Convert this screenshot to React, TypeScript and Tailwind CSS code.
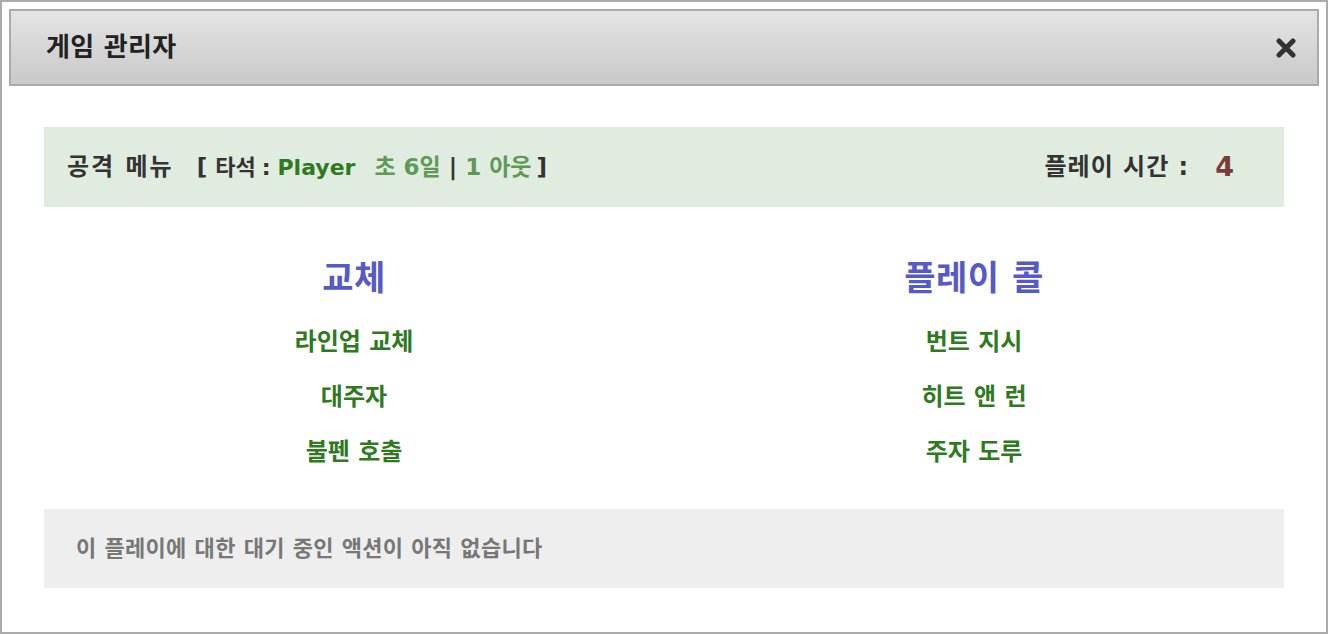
import * as React from "react"

const subs = ["라인업 교체", "대주자", "불펜 호출"]
const calls = ["번트 지시", "히트 앤 런", "주자 도루"]

function MenuColumn({ title, items }: { title: string; items: string[] }) {
  return (
    <div className="flex flex-col items-center">
      <h3 className="text-[34px] font-bold leading-[40px] tracking-[0.5px] text-[#5559c9]">{title}</h3>
      <ul className="mt-[28px] flex flex-col items-center gap-[23px]">
        {items.map((item) => (
          <li key={item} className="text-[24px] font-bold leading-[32px] text-[#2f7a1f]">
            {item}
          </li>
        ))}
      </ul>
    </div>
  )
}

export default function App() {
  return (
    <div
      className="h-[634px] w-[1328px] border-2 border-[#aaaaaa] bg-white p-[7px]"
      style={{ fontFamily: '"DejaVu Sans", "Noto Sans CJK KR", sans-serif' }}
    >
      <header className="flex h-[77px] items-center justify-between border-2 border-[#aaaaaa] bg-gradient-to-b from-[#e4e4e4] to-[#c9c9c9] pl-[35px] pr-[21px]">
        <h2 className="text-[26px] font-bold tracking-[0.3px] text-[#222]">게임 관리자</h2>
        <button aria-label="닫기" className="text-[#333]">
          <svg width="20" height="20" viewBox="0 0 20 20">
            <path d="M3 3 L17 17 M17 3 L3 17" stroke="currentColor" strokeWidth="5" strokeLinecap="round" />
          </svg>
        </button>
      </header>

      <div className="px-[35px] pt-[41px]">
        <div className="flex h-[80px] items-center justify-between bg-[#e0ecdf] pl-[23px] pr-[49px] font-bold">
          <div className="flex items-center text-[23px] text-[#333]">
            <span className="text-[24px] tracking-[2px]">공격 메뉴</span>
            <span className="ml-[23px]">[</span>
            <span className="ml-[8px] text-[22px]">타석</span>
            <span className="ml-[6px] text-[22px]">:</span>
            <span className="ml-[7px] text-[22px] text-[#2e7a1e]">Player</span>
            <span className="ml-[19px] text-[#5e9a55]">초 6일</span>
            <span className="ml-[8px] mr-[8px]">|</span>
            <span className="text-[#5e9a55]">1 아웃</span>
            <span className="ml-[5px]">]</span>
          </div>
          <div className="flex items-center text-[24px] tracking-[1px] text-[#333]">
            <span>플레이 시간 :</span>
            <span className="ml-[26px] text-[27px] text-[#7a3b3b]">4</span>
          </div>
        </div>

        <div className="grid grid-cols-2 pt-[51px]">
          <MenuColumn title="교체" items={subs} />
          <MenuColumn title="플레이 콜" items={calls} />
        </div>

        <div className="mt-[41px] flex h-[79px] items-center bg-[#eeeeee] px-[32px]">
          <p className="text-[22px] font-bold tracking-[0.3px] text-[#777]">이 플레이에 대한 대기 중인 액션이 아직 없습니다</p>
        </div>
      </div>
    </div>
  )
}
